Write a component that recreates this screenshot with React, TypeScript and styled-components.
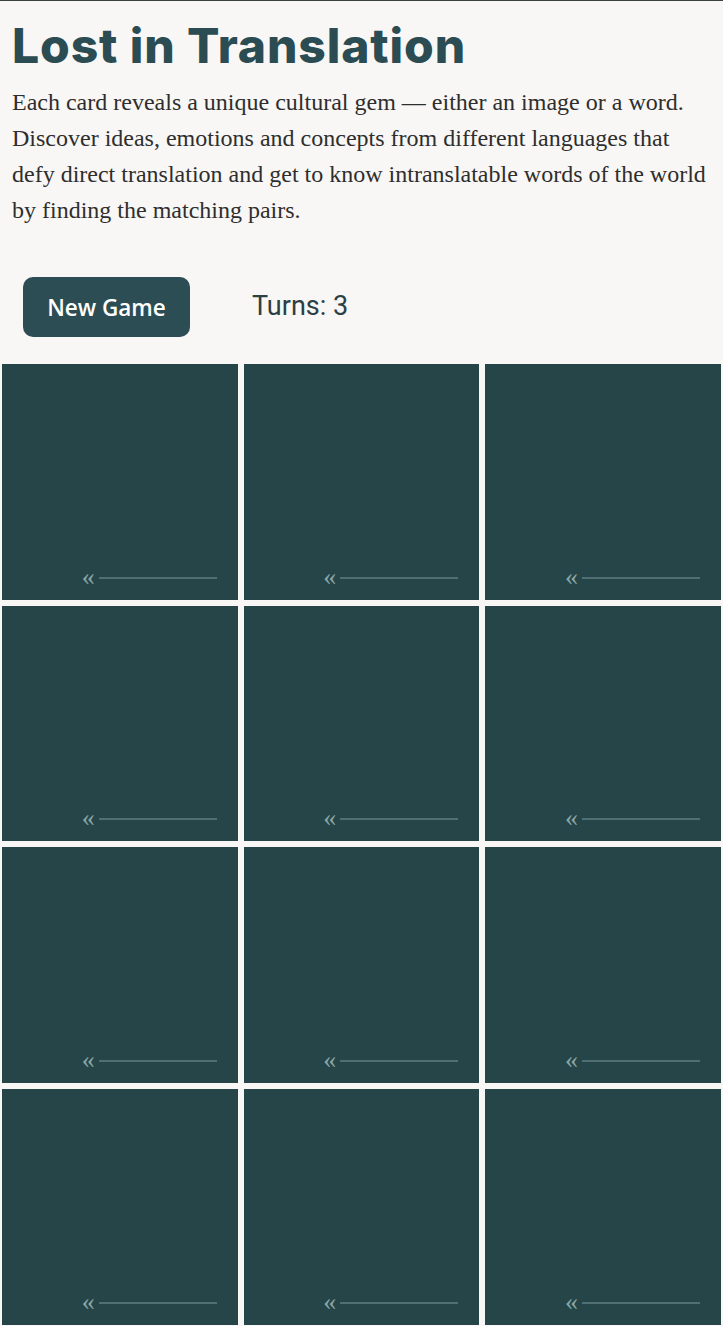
import React from "react";
import styled, { createGlobalStyle } from "styled-components";

const Global = createGlobalStyle`
  html, body { margin: 0; padding: 0; background: #f9f7f5; }
  body { border-top: 1px solid #3a3f3f; }
  * { box-sizing: border-box; }
`;

const Page = styled.div`
  background: #f9f7f5;
  width: 723px;
`;

const Header = styled.header`
  padding: 0 12px;
`;

const Title = styled.h1`
  margin: 0;
  padding-top: 19px;
  font-family: Inter, "Noto Sans", sans-serif;
  font-weight: 800;
  font-size: 48px;
  line-height: 52px;
  letter-spacing: 0.9px;
  color: #2b4c52;
`;

const Intro = styled.p`
  margin: 12px 0 0;
  font-family: "Liberation Serif", "Times New Roman", serif;
  font-size: 24px;
  line-height: 36px;
  color: #2e2e2e;
`;

const Controls = styled.div`
  display: flex;
  align-items: center;
  gap: 62px;
  padding: 49px 23px 27px;
`;

const Button = styled.button`
  width: 167px;
  height: 60px;
  border: none;
  border-radius: 10px;
  background: #2c4d53;
  color: #ffffff;
  font-family: "Open Sans", "Noto Sans", sans-serif;
  font-weight: 600;
  font-size: 22.5px;
  cursor: pointer;
`;

const Turns = styled.div`
  font-family: Roboto, "Liberation Sans", sans-serif;
  font-size: 27px;
  color: #2b3f44;
  margin-top: -2px;
`;

const Grid = styled.div`
  display: grid;
  grid-template-columns: repeat(3, 1fr);
  gap: 6px;
  padding: 0 2px 0 2px;
`;

const Card = styled.div`
  aspect-ratio: 1 / 1;
  background: #264548;
  display: flex;
  align-items: flex-end;
  justify-content: flex-end;
  padding: 0 21px 15px 0;
`;

const Mark = styled.div`
  display: flex;
  align-items: center;
  gap: 4px;
`;

const Chevron = styled.span`
  font-family: "Liberation Serif", serif;
  font-size: 26px;
  line-height: 16px;
  color: #8aa6a6;
`;

const Line = styled.span`
  display: block;
  width: 118px;
  height: 2px;
  background: #4f6f72;
  margin-top: 2px;
`;

export default function App() {
  const cards = Array.from({ length: 12 }, (_, i) => i);
  return (
    <Page>
      <Global />
      <Header>
        <Title>Lost in Translation</Title>
        <Intro>
          Each card reveals a unique cultural gem — either an image or a word.
          Discover ideas, emotions and concepts from different languages that
          defy direct translation and get to know intranslatable words of the
          world by finding the matching pairs.
        </Intro>
      </Header>
      <Controls>
        <Button>New Game</Button>
        <Turns>Turns: 3</Turns>
      </Controls>
      <Grid>
        {cards.map((i) => (
          <Card key={i}>
            <Mark>
              <Chevron>«</Chevron>
              <Line />
            </Mark>
          </Card>
        ))}
      </Grid>
    </Page>
  );
}
